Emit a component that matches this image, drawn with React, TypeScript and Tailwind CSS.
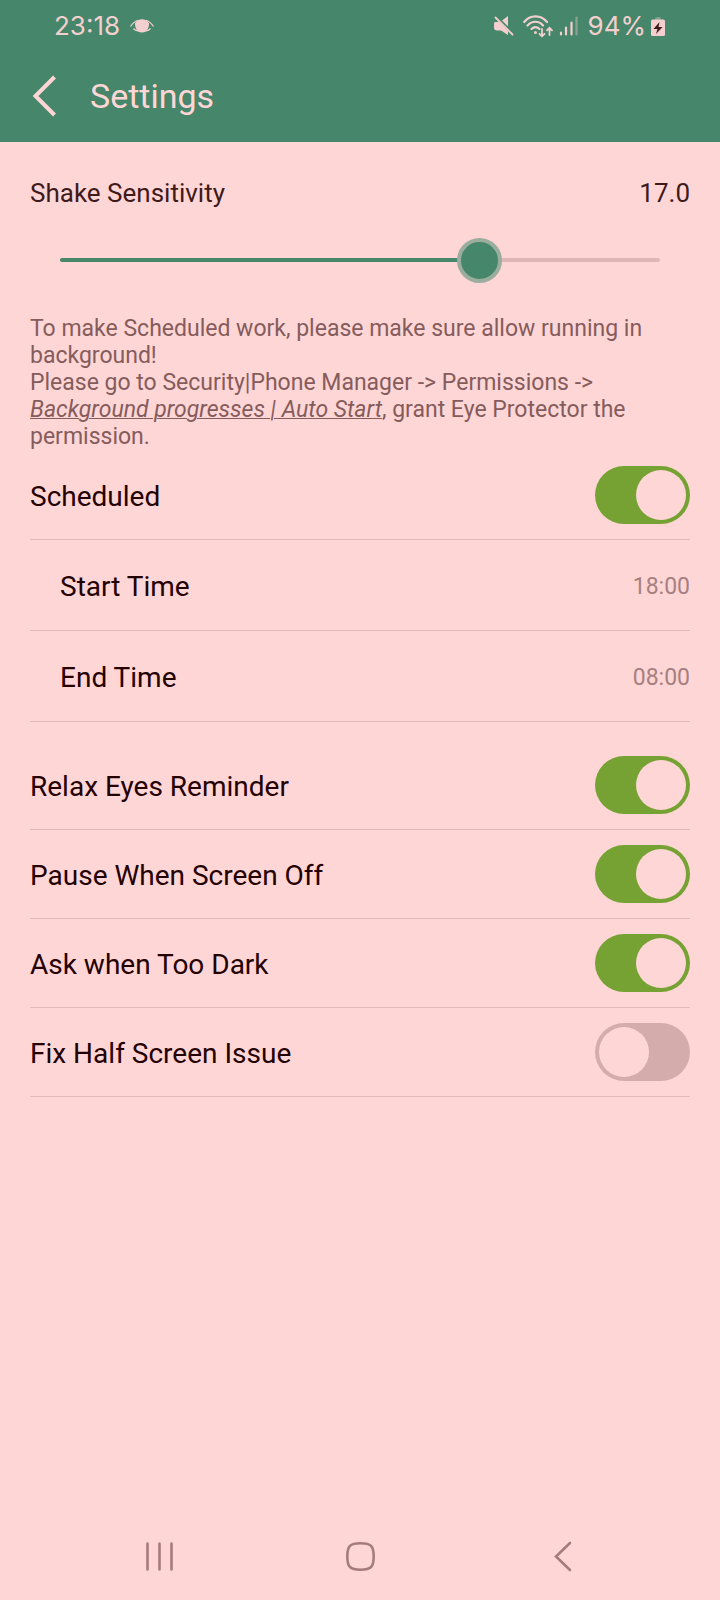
import { useId, useState } from "react";

function EyeIcon() {
  return (
    <svg className="h-4 w-6" viewBox="0 0 24 16" fill="#f3d0cf" aria-hidden="true">
      <path d="M7.500 2.500Q12 0 16.500 2.500L19 5Q19.500 8.500 17.500 11.500Q16.500 14.500 12 14.500T6.500 11.500Q4.500 8.500 5 5Z" />
      <path d="M.5 8.500Q3.500 3.800 8 2.300M23.500 8.500Q20.500 3.800 16 2.300M3.500 10.500Q5 12.300 8 13M20.500 10.500Q19 12.300 16 13" fill="none" stroke="#f3d0cf" strokeWidth="1.200" />
    </svg>
  );
}

function MuteIcon() {
  return (
    <svg className="h-5 w-5" viewBox="0 0 20 20" fill="#f3d0cf" aria-hidden="true">
      <path d="M1 6H5L14 15V19L7 14.500H3Q0 14.500 0 11.500V8Q0 6 1 6Z" />
      <path d="M8 4.500L14 0V10.500Z" />
      <path d="M1.500 1.500L18.500 18.500" stroke="#f3d0cf" strokeWidth="1.800" strokeLinecap="round" />
    </svg>
  );
}

function WifiIcon() {
  return (
    <svg className="h-[23px] w-[30px]" viewBox="0 0 30 23" fill="none" stroke="#f3d0cf" strokeWidth="2.200" strokeLinecap="round" aria-hidden="true">
      <path d="M1.200 7C7 -.5 18 -.5 24 7M4.500 10.500C9 5.500 16 5.500 20 10.500M8.500 14C11 11.500 14 11.500 16.500 14" />
      <circle cx="12.500" cy="17.500" r="1.500" fill="#f3d0cf" stroke="none" />
      <path d="M19 14V21M16.500 18.800L19 21.300L21.500 18.800M26.500 20V13M24 15.300L26.500 12.800L29 15.300" strokeWidth="1.800" />
    </svg>
  );
}

function SignalIcon() {
  return (
    <svg className="h-5 w-[19px]" viewBox="0 0 19 20" stroke="#f3d0cf" strokeWidth="2.200" strokeLinecap="round" aria-hidden="true">
      <path d="M2 16.500V18.500M7 11.500V18.500M12.500 6.500V18.500" />
      <path d="M17.500 1.500V18.500" opacity=".4" />
    </svg>
  );
}

function BatteryIcon() {
  return (
    <svg className="h-[19px] w-[14px]" viewBox="0 0 14 19" aria-hidden="true">
      <path d="M4 2Q4 0 6 0H8Q10 0 10 2V3H4Z" fill="#f3d0cf" opacity=".35" />
      <rect y="2.500" width="14" height="16.500" rx="1.500" fill="#f3d0cf" />
      <path d="M8.500 5L2.500 12H6.500L5 17L11.500 10H7.500Z" fill="#3f1a1a" />
    </svg>
  );
}

function StatusBar() {
  return (
    <div className="flex h-[52px] items-center justify-between pr-[55px] pl-[54px] font-['Inter',sans-serif] text-[26px] leading-8 text-[#f3d0cf]">
      <div className="flex items-center gap-[10px]">
        <span>23:18</span>
        <EyeIcon />
      </div>
      <div className="flex items-center">
        <MuteIcon />
        <span className="ml-[9px] flex"><WifiIcon /></span>
        <span className="ml-[6px] flex"><SignalIcon /></span>
        <span className="ml-[10px]">94%</span>
        <span className="ml-[5px] flex"><BatteryIcon /></span>
      </div>
    </div>
  );
}

function SwitchRow({ label, initial }: { label: string; initial: boolean }) {
  const id = useId();
  const [on, setOn] = useState(initial);
  return (
    <div className="flex items-center justify-between border-b border-[#e2b8b9] py-[15px]">
      <label htmlFor={id} className="pt-1 text-[28px] leading-8">{label}</label>
      <input
        id={id}
        type="checkbox"
        role="switch"
        checked={on}
        onChange={(e) => setOn(e.target.checked)}
        className="flex h-[58px] w-[95px] shrink-0 cursor-pointer appearance-none items-center justify-start rounded-full bg-[#d4acac] p-1 before:size-[50px] before:rounded-full before:bg-[#ffd6d6] before:content-[''] checked:justify-end checked:bg-[#75a233]"
      />
    </div>
  );
}

function TimeRow({ label, time }: { label: string; time: string }) {
  return (
    <button type="button" className="flex w-full items-center justify-between border-b border-[#e2b8b9] pt-[31px] pb-[27px] pl-[30px] text-left">
      <span className="text-[28px] leading-8">{label}</span>
      <span className="text-[23px] leading-8 text-[#a68080]">{time}</span>
    </button>
  );
}

function SensitivitySlider() {
  const id = useId();
  const min = 10;
  const max = 20;
  const [value, setValue] = useState(17);
  return (
    <section>
      <div className="flex items-center justify-between text-[26px] leading-8 text-[#3f1a1a]">
        <label htmlFor={id}>Shake Sensitivity</label>
        <output htmlFor={id}>{value.toFixed(1)}</output>
      </div>
      <div className="relative mx-[30px] mt-[28px] flex h-[46px] items-center">
        <div className="h-1 w-full overflow-hidden rounded-full bg-[#deb6b6]">
          <div className="h-full bg-[#46866a]" style={{ width: `${((value - min) / (max - min)) * 100}%` }} />
        </div>
        <input
          id={id}
          type="range"
          min={min}
          max={max}
          step={0.1}
          value={value}
          onChange={(e) => setValue(Number(e.target.value))}
          className="absolute -inset-x-[22px] inset-y-0 cursor-pointer appearance-none bg-transparent [&::-webkit-slider-thumb]:size-[45px] [&::-webkit-slider-thumb]:appearance-none [&::-webkit-slider-thumb]:rounded-full [&::-webkit-slider-thumb]:border-4 [&::-webkit-slider-thumb]:border-[#9bad9e] [&::-webkit-slider-thumb]:bg-[#46866a]"
        />
      </div>
    </section>
  );
}

function NavigationBar() {
  return (
    <nav className="grid h-[88px] grid-cols-3 px-[58px] text-[#a67b7b]">
      <button type="button" aria-label="Recent apps" className="flex items-center justify-center">
        <svg className="size-8" viewBox="0 0 32 32" fill="none" stroke="currentColor" strokeWidth="2.600" strokeLinecap="round">
          <path d="M4.500 3.500V29.500M16.500 3.500V29.500M28.500 3.500V29.500" />
        </svg>
      </button>
      <button type="button" aria-label="Home" className="flex items-center justify-center">
        <svg className="size-8" viewBox="0 0 32 32" fill="none" stroke="currentColor" strokeWidth="2.600">
          <path d="M16.500 3.200C27 3.200 29.700 6 29.700 16.500S27 29.700 16.500 29.700S3.300 27 3.300 16.500S6 3.200 16.500 3.200Z" />
        </svg>
      </button>
      <button type="button" aria-label="Back" className="flex items-center justify-center">
        <svg className="size-8" viewBox="0 0 32 32" fill="none" stroke="currentColor" strokeWidth="2.600" strokeLinecap="round">
          <path d="M25 3L11 16.500L25 30" />
        </svg>
      </button>
    </nav>
  );
}

export default function App() {
  return (
    <div className="flex min-h-screen flex-col bg-[#ffd6d6] font-['Roboto',sans-serif] text-[#240000]">
      <header className="bg-[#46866a]">
        <StatusBar />
        <div className="flex h-[90px] items-center gap-[34px] pb-[2px] pl-[32px] text-[#ffd6d6]">
          <button type="button" aria-label="Back">
            <svg className="h-[42px] w-6" viewBox="0 0 24 42" fill="none" stroke="currentColor" strokeWidth="4">
              <path d="M22.500 2L3.500 21L22.500 40" />
            </svg>
          </button>
          <h1 className="text-[34px] leading-10">Settings</h1>
        </div>
      </header>
      <main className="grow px-[30px] pt-[35px]">
        <SensitivitySlider />
        <p className="mt-8 mb-px text-[23px] leading-[27px] text-[#855c5c]">
          To make Scheduled work, please make sure allow running in background!
          <br />
          Please go to Security|Phone Manager -&gt; Permissions -&gt;
          <br />
          <i className="underline decoration-1">Background progresses | Auto Start</i>, grant Eye Protector the permission.
        </p>
        <SwitchRow label="Scheduled" initial />
        <TimeRow label="Start Time" time="18:00" />
        <TimeRow label="End Time" time="08:00" />
        <div className="mt-[19px]">
          <SwitchRow label="Relax Eyes Reminder" initial />
          <SwitchRow label="Pause When Screen Off" initial />
          <SwitchRow label="Ask when Too Dark" initial />
          <SwitchRow label="Fix Half Screen Issue" initial={false} />
        </div>
      </main>
      <NavigationBar />
    </div>
  );
}
